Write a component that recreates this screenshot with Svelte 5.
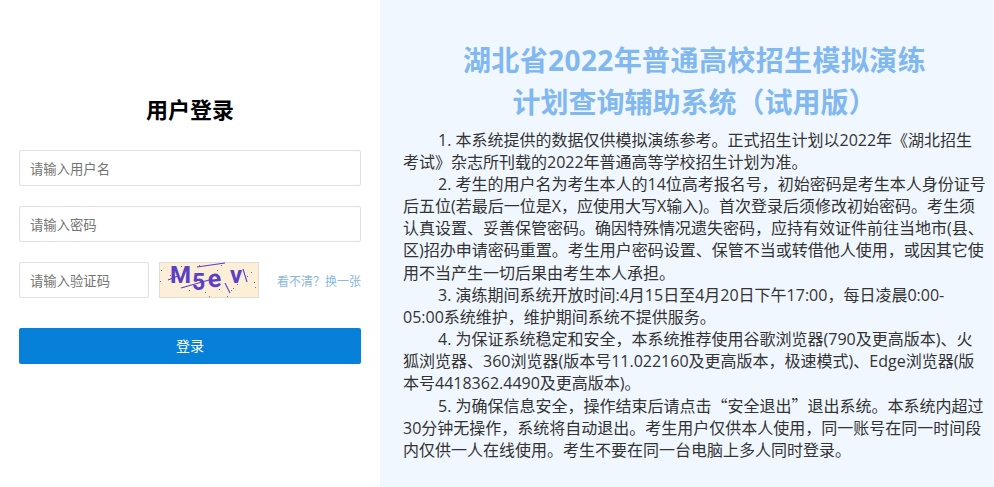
<script>
  const notes = [
    ['1. 本系统提供的数据仅供模拟演练参考。正式招生计划以2022年《湖北招生考试》杂志所刊载的2022年普通高等学校招生计划为准。'],
    ['2. 考生的用户名为考生本人的14位高考报名号，初始密码是考生本人身份证号后五位(若最后一位是X，应使用大写X输入)。首次登录后须修改初始密码。考生须认真设置、妥善保管密码。确因特殊情况遗失密码，应持有效证件前往当地市(县、区)招办申请密码重置。考生用户密码设置、保管不当或转借他人使用，或因其它使用不当产生一切后果由考生本人承担。'],
    ['3. 演练期间系统开放时间:4月15日至4月20日下午17:00，每日凌晨0:00-', '05:00系', '统维护，维护期间系统不提供服务。'],
    ['4. 为保证系统稳定和安全，本系统推荐使用谷歌浏览器(790及更高版本)、火狐浏览器、360浏览器(版本号11.022160及更高版本，极速模式)、Edge浏览器(版本号4418362.4490及更高版本)。'],
    ['5. 为确保信息安全，操作结束后请点击', '“', '安全退出', '”', '退出系统。本系统内超过30分钟无操作，系统将自动退出。考生用户仅供本人使用，同一账号在同一时间段内仅供一人在线使用。考生不要在同一台电脑上多人同时登录。']
  ];
  const dots = [[2,8],[1,19],[11,13],[22,4],[40,3],[46,3],[58,8],[62,3],[30,28],[46,30],[50,34],[60,27],[72,28],[88,14],[92,10],[95,20],[96,25],[78,22],[74,26],[36,12],[68,34]];
</script>

<div class="page">
  <section class="login">
    <h2>用户登录</h2>
    <input class="field" placeholder="请输入用户名" />
    <input class="field" placeholder="请输入密码" />
    <div class="captcha-row">
      <input class="field code" placeholder="请输入验证码" />
      <svg class="captcha" width="100" height="36" viewBox="0 0 100 36">
        <rect x="0.5" y="0.5" width="99" height="35" fill="#fbefd8" stroke="#e0dcd2" />
        <g fill="#5b3fc4" font-family="Roboto, sans-serif" font-weight="700">
          <text x="11" y="21" font-size="24">M</text>
          <text x="33" y="28" font-size="23">5</text>
          <text x="49" y="25" font-size="25" transform="rotate(-6 56 20)">e</text>
          <text x="71" y="21" font-size="24">v</text>
        </g>
        <g stroke="#5b3fc4" stroke-width="1.1" fill="none">
          <path d="M38 5L66 1" />
          <path d="M22 26L50 18" />
          <path d="M66 21L71 31" />
          <path d="M84 7L88 20" />
          <path d="M9 18L19 14" />
        </g>
        {#each dots as [x, y]}
          <rect x={x} y={y} width="1" height="1" fill="#7a6aa8" />
        {/each}
      </svg>
      <span class="refresh">看不清？换一张</span>
    </div>
    <button class="submit">登录</button>
  </section>
  <section class="info">
    <h1><span class="wide">湖北省2022年普通高校招生模拟演练</span><br />计划查询辅助系统（试用版）</h1>
    {#each notes as parts}
      <p>
        {#each parts as part}
          {#if part === '“' || part === '”'}<span class="cjk">{part}</span>{:else if part === '05:00系'}<span class="keep">{part}</span>{:else}{part}{/if}
        {/each}
      </p>
    {/each}
  </section>
</div>

<style>
  :global(body) {
    margin: 0;
    font-family: "Open Sans", "Noto Sans CJK SC", sans-serif;
  }
  .page {
    display: flex;
    width: 994px;
    height: 487px;
    overflow: hidden;
  }
  .login {
    box-sizing: border-box;
    width: 380px;
    flex: none;
    padding: 93px 19px 0;
    background: #fff;
  }
  h2 {
    margin: 0 0 27px;
    font: 700 22px/30px "Noto Sans CJK SC", sans-serif;
    color: #000;
    text-align: center;
  }
  .field {
    display: block;
    box-sizing: border-box;
    width: 100%;
    height: 36px;
    margin: 0 0 20px;
    padding: 0 10px;
    border: 1px solid #dcdfe6;
    border-radius: 2px;
    outline: none;
    font: 13.33px "Noto Sans CJK SC", sans-serif;
    background: #fff;
  }
  .field::placeholder {
    color: #757575;
    opacity: 1;
  }
  .captcha-row {
    display: flex;
    align-items: center;
    margin-bottom: 30px;
  }
  .field.code {
    width: 130px;
    margin: 0;
    flex: none;
  }
  .captcha {
    display: block;
    flex: none;
    margin-left: 10px;
  }
  .refresh {
    margin-left: auto;
    font: 12px "Noto Sans CJK SC", sans-serif;
    color: #8ab8e0;
    white-space: nowrap;
  }
  .submit {
    display: block;
    width: 100%;
    height: 36px;
    padding: 0 0 2px;
    border: 0;
    border-radius: 2px;
    background: #0680d8;
    color: #fff;
    font: 14px "Noto Sans CJK SC", sans-serif;
  }
  .info {
    box-sizing: border-box;
    flex: 1;
    padding: 39px 8px 0 23px;
    background: #f0f7ff;
    color: #333;
    font-size: 16px;
    line-height: 22.1px;
  }
  h1 {
    margin: 0 0 6px;
    font: 700 28px/42px "Open Sans", "Noto Sans CJK SC", sans-serif;
    color: #82b8f0;
    text-align: center;
  }
  .wide {
    letter-spacing: 0.4px;
  }
  p {
    margin: 0;
    text-indent: 35px;
  }
  .cjk {
    font-family: "Noto Sans CJK SC", sans-serif;
  }
  .keep {
    white-space: nowrap;
  }
</style>
